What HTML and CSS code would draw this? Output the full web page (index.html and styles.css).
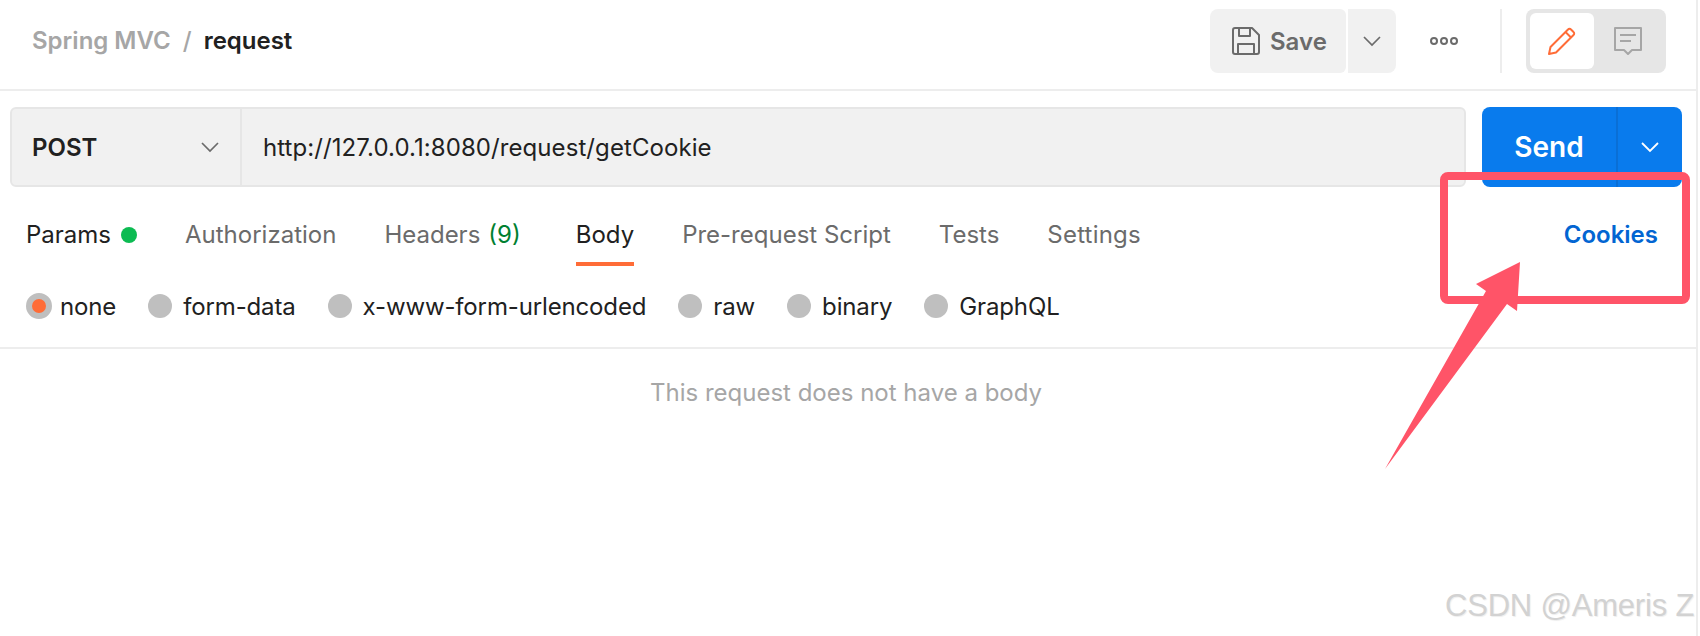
FILE: index.html
```html
<!DOCTYPE html>
<html lang="en">
<head>
    <meta charset="UTF-8">
    <title>request</title>
    <link rel="stylesheet" href="styles.css">
</head>
<body>
    <div class="app">
        <header class="topbar">
            <div class="crumbs">
                <span class="crumb-parent">Spring MVC</span>
                <span class="crumb-sep">/</span>
                <span class="crumb-name">request</span>
            </div>
            <div class="actions">
                <button class="btn-save">
                    <svg width="28" height="28" viewBox="0 0 28 28" fill="none" stroke="#6b6b6b" stroke-width="2" stroke-linejoin="round"><path d="M1 3a2 2 0 0 1 2-2h17l7 7v17a2 2 0 0 1-2 2H3a2 2 0 0 1-2-2z"/><path d="M7 1v8h11V1"/><path d="M6 27V17h16v10"/></svg>
                    <span>Save</span>
                </button>
                <button class="btn-save-more">
                    <svg width="18" height="11" viewBox="0 0 18 11" fill="none" stroke="#6b6b6b" stroke-width="1.7"><path d="M1 1l8 8 8-8"/></svg>
                </button>
                <div class="dots"><i></i><i></i><i></i></div>
                <div class="vline"></div>
                <div class="mode">
                    <div class="mode-on">
                        <svg width="28" height="28" viewBox="0 0 28 28" fill="none" stroke="#ff6c37" stroke-width="2" stroke-linejoin="round"><path d="M1 27l1.500-7L20 2.500a2 2 0 0 1 3 0l2.500 2.500a2 2 0 0 1 0 3L8 25.500z"/><path d="M17.500 5l5.500 5.500"/></svg>
                    </div>
                    <div class="mode-off">
                        <svg width="28" height="28" viewBox="0 0 28 28" fill="none" stroke="#a6a6a6" stroke-width="2" stroke-linejoin="round"><path d="M1 1h26v22H18l-4 4-4-4H1z"/><path d="M6 8h16M6 14h11"/></svg>
                    </div>
                </div>
            </div>
        </header>

        <div class="reqbar">
            <div class="urlbox">
                <div class="method">
                    <span>POST</span>
                    <svg width="18" height="11" viewBox="0 0 18 11" fill="none" stroke="#6b6b6b" stroke-width="1.7"><path d="M1 1l8 8 8-8"/></svg>
                </div>
                <div class="url">http://127.0.0.1:8080/request/getCookie</div>
            </div>
            <div class="send">
                <div class="send-main">Send</div>
                <div class="send-more">
                    <svg width="18" height="11" viewBox="0 0 18 11" fill="none" stroke="#fff" stroke-width="1.8"><path d="M1 1l8 8 8-8"/></svg>
                </div>
            </div>
        </div>

        <nav class="tabs">
            <a class="tab tab-dark">Params<i class="green-dot"></i></a>
            <a class="tab">Authorization</a>
            <a class="tab tab-headers">Headers <span class="count">(9)</span></a>
            <a class="tab tab-dark tab-active">Body</a>
            <a class="tab">Pre-request Script</a>
            <a class="tab">Tests</a>
            <a class="tab tab-settings">Settings</a>
            <a class="cookies">Cookies</a>
        </nav>

        <div class="bodytypes">
            <label class="opt opt-none"><i class="radio radio-on"></i>none</label>
            <label class="opt"><i class="radio"></i>form-data</label>
            <label class="opt"><i class="radio"></i>x-www-form-urlencoded</label>
            <label class="opt"><i class="radio"></i>raw</label>
            <label class="opt"><i class="radio"></i>binary</label>
            <label class="opt"><i class="radio"></i>GraphQL</label>
        </div>

        <p class="empty">This request does not have a body</p>

        <!-- annotation drawn over the screenshot -->
        <div class="mark-box"></div>
        <svg class="mark-arrow" width="140" height="212" viewBox="0 0 140 212"><path fill="#ff5468" d="M137 2L93 24l10 7L2 209 124 44l10 7z"/></svg>
        <div class="watermark">CSDN @Ameris Z</div>
    </div>
</body>
</html>
```

FILE: styles.css
```css
* {
    box-sizing: border-box;
}
body {
    margin: 0;
    background: #fff;
    font-family: Inter, "Noto Sans", sans-serif;
    color: #212121;
}
button {
    font-family: inherit;
    border: none;
}
.app {
    position: relative;
    width: 1698px;
    height: 636px;
    overflow: hidden;
    border-right: 2px solid #ededed;
}

/* top bar */
.topbar {
    display: flex;
    justify-content: space-between;
    height: 91px;
    padding: 9px 30px 0 32px;
    border-bottom: 2px solid #ededed;
}
.crumbs {
    display: flex;
    align-items: center;
    height: 62px;
    font-size: 24px;
    font-weight: 600;
}
.crumb-parent {
    color: #a6a6a6;
}
.crumb-sep {
    margin: 0 12px;
    color: #a6a6a6;
    font-weight: 500;
}
.actions {
    display: flex;
    height: 64px;
}
.btn-save {
    display: flex;
    align-items: center;
    gap: 10px;
    width: 136px;
    padding-left: 22px;
    background: #f1f1f1;
    border-radius: 8px 6px 6px 8px;
    color: #6b6b6b;
    font-size: 24px;
    font-weight: 600;
}
.btn-save-more {
    display: flex;
    align-items: center;
    justify-content: center;
    width: 48px;
    margin-left: 2px;
    background: #f1f1f1;
    border-radius: 0 8px 8px 0;
}
.dots {
    display: flex;
    align-items: center;
    gap: 2px;
    margin-left: 34px;
}
.dots i {
    width: 8px;
    height: 8px;
    border: 2px solid #6b6b6b;
    border-radius: 50%;
}
.vline {
    width: 2px;
    margin-left: 42px;
    background: #ededed;
}
.mode {
    display: flex;
    width: 140px;
    margin-left: 24px;
    padding: 4px;
    background: #e6e6e6;
    border-radius: 8px;
}
.mode-on, .mode-off {
    display: flex;
    align-items: center;
    justify-content: center;
    width: 64px;
    border-radius: 6px;
}
.mode-on {
    background: #fff;
}
.mode-off {
    width: 68px;
}

/* method + url */
.reqbar {
    display: flex;
    gap: 16px;
    margin-top: 16px;
    padding-left: 10px;
}
.urlbox {
    display: flex;
    width: 1456px;
    height: 80px;
    background: #f1f1f1;
    border: 2px solid #e6e6e6;
    border-radius: 6px;
}
.method {
    display: flex;
    align-items: center;
    justify-content: space-between;
    width: 230px;
    padding: 0 21px 0 20px;
    border-right: 2px solid #e6e6e6;
    font-size: 24px;
    font-weight: 600;
}
.url {
    display: flex;
    align-items: center;
    padding-left: 21px;
    font-size: 24px;
    letter-spacing: 0.08px;
}
.send {
    display: flex;
    width: 200px;
    height: 80px;
    background: #097bed;
    border-radius: 8px;
    color: #fff;
}
.send-main {
    display: flex;
    align-items: center;
    justify-content: center;
    width: 134px;
    font-size: 28px;
    font-weight: 600;
}
.send-more {
    display: flex;
    align-items: center;
    justify-content: center;
    flex: 1;
    border-left: 2px solid #0a6fd6;
}

/* tabs */
.tabs {
    display: flex;
    gap: 48px;
    height: 79px;
    padding: 0 38px 0 26px;
    font-size: 24px;
    color: #6b6b6b;
}
.tab {
    display: flex;
    align-items: center;
    gap: 10px;
    height: 79px;
    padding-top: 20px;
    border-bottom: 4px solid transparent;
}
.tab-dark {
    color: #212121;
}
.tab-active {
    border-bottom-color: #ff6c37;
}
.tab-headers {
    gap: 8px;
    margin-right: 7px;
}
.tab-settings {
    letter-spacing: 0.2px;
}
.count {
    color: #007f31;
}
.green-dot {
    width: 16px;
    height: 16px;
    background: #0cbb52;
    border-radius: 50%;
}
.cookies {
    display: flex;
    align-items: center;
    height: 79px;
    margin-left: auto;
    padding: 20px 0 4px;
    color: #0265d2;
    font-weight: 600;
}

/* body type radios */
.bodytypes {
    display: flex;
    align-items: center;
    gap: 32px;
    height: 83px;
    padding: 0 0 1px 26px;
    border-bottom: 2px solid #ededed;
    font-size: 24px;
    letter-spacing: -0.14px;
}
.opt {
    display: flex;
    align-items: center;
    gap: 11px;
}
.opt-none {
    gap: 8px;
}
.radio {
    width: 24px;
    height: 24px;
    background: #bfbfbf;
    border-radius: 50%;
}
.radio-on {
    width: 26px;
    height: 26px;
    border: 6px solid #bfbfbf;
    background: #ff6c37;
}
.empty {
    margin: 29px 0 0;
    padding-right: 4px;
    text-align: center;
    font-size: 24px;
    color: #a6a6a6;
}

/* annotation */
.mark-box {
    position: absolute;
    left: 1440px;
    top: 172px;
    width: 250px;
    height: 132px;
    border: 8px solid #ff5468;
    border-radius: 8px;
}
.mark-arrow {
    position: absolute;
    left: 1383px;
    top: 260px;
}
.watermark {
    position: absolute;
    left: 1445px;
    top: 588px;
    font-family: "Liberation Sans", Arial, sans-serif;
    font-size: 31px;
    letter-spacing: -0.2px;
    white-space: nowrap;
    color: #d2d2d2;
    text-shadow: 1px 1px 1px #eee;
}
```
